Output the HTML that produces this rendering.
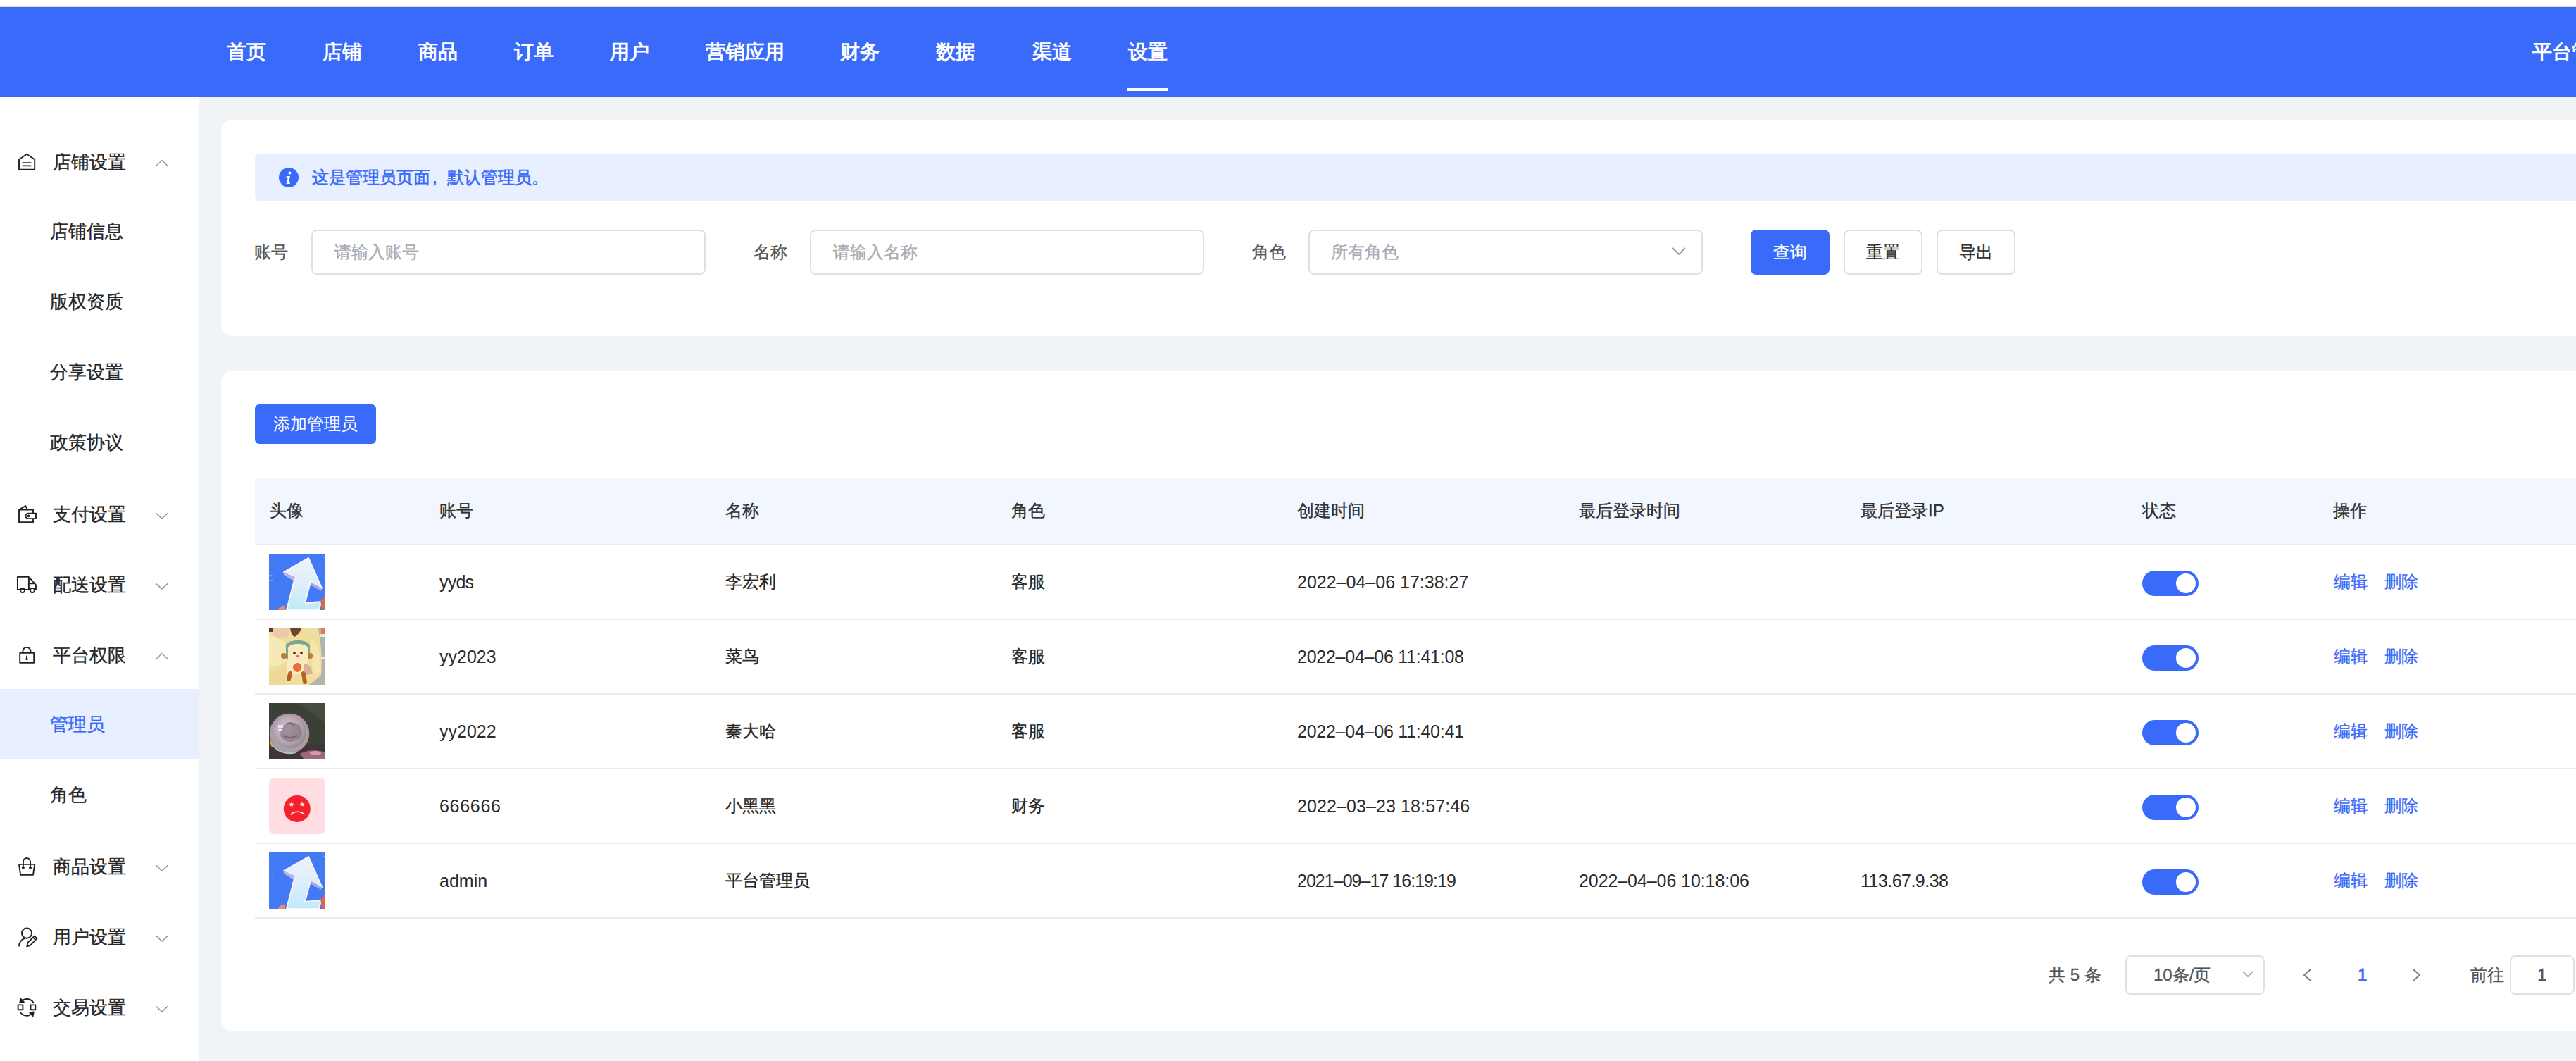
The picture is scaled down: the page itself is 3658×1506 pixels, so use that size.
<!DOCTYPE html>
<html><head><meta charset="utf-8">
<style>
*{margin:0;padding:0;box-sizing:border-box}
html,body{width:3658px;height:1506px;overflow:hidden;background:#f0f4f7;font-family:"Liberation Sans",sans-serif;color:#333}
.mh,.mi,.lbl,.th,.td,.lk,.ph,.btn{-webkit-text-stroke:0.35px currentColor}
.a{position:absolute;white-space:nowrap}
.nav{position:absolute;top:60px;font-size:28px;line-height:28px;color:#fff;font-weight:bold;white-space:nowrap}
.mh{position:absolute;left:75px;font-size:26px;line-height:26px;color:#262626;white-space:nowrap}
.mi{position:absolute;left:71px;font-size:26px;line-height:26px;color:#262626;white-space:nowrap}
.ic{position:absolute;left:24px;width:28px;height:28px}
.chev{position:absolute;left:219px;width:22px;height:14px}
.card{position:absolute;left:314px;width:3400px;background:#fff;border-radius:16px}
.lbl{position:absolute;font-size:24px;line-height:24px;color:#555;white-space:nowrap}
.inp{position:absolute;top:326px;height:64px;border:2px solid #e0e0e0;border-radius:8px;background:#fff}
.ph{position:absolute;font-size:24px;line-height:24px;color:#a8abb2;white-space:nowrap}
.btn{position:absolute;top:326px;width:112px;height:64px;border:2px solid #e0e0e0;border-radius:8px;background:#fff;font-size:24px;line-height:60px;text-align:center;color:#333;white-space:nowrap}
.th{position:absolute;font-size:24px;line-height:24px;color:#303030;white-space:nowrap}
.td{position:absolute;font-size:24px;line-height:24px;color:#262626;white-space:nowrap}

.av{position:absolute;left:382px;width:80px;height:80px;overflow:hidden}
.sw{position:absolute;left:3042px;width:80px;height:36px;border-radius:18px;background:#3a6afa}
.sw i{position:absolute;left:48px;top:4px;width:28px;height:28px;border-radius:50%;background:#fff}
.tl{position:absolute;font-size:25px;line-height:25px;color:#2b2b2b;white-space:nowrap}
.lk{position:absolute;font-size:24px;line-height:24px;color:#3a6afa;white-space:nowrap}
</style></head>
<body>
<div class="a" style="left:0px;top:0px;width:3658px;height:8px;background:#fff"></div>
<div class="a" style="left:0px;top:8px;width:3658px;height:2px;background:#dcdbd8"></div>
<div class="a" style="left:0px;top:10px;width:3658px;height:128px;background:#3a6afa"></div>
<div class="nav" style="left:322px">首页</div>
<div class="nav" style="left:458px">店铺</div>
<div class="nav" style="left:594px">商品</div>
<div class="nav" style="left:730px">订单</div>
<div class="nav" style="left:866px">用户</div>
<div class="nav" style="left:1002px">营销应用</div>
<div class="nav" style="left:1193px">财务</div>
<div class="nav" style="left:1329px">数据</div>
<div class="nav" style="left:1466px">渠道</div>
<div class="nav" style="left:1602px">设置</div>
<div class="a" style="left:1601px;top:125px;width:57px;height:4px;background:#fff"></div>
<div class="nav" style="left:3596px">平台管理员</div>
<div class="a" style="left:0px;top:138px;width:282px;height:1368px;background:#fff"></div>
<div class="mh" style="top:217px">店铺设置</div>
<div class="mi" style="top:315px">店铺信息</div>
<div class="mi" style="top:415px">版权资质</div>
<div class="mi" style="top:515px">分享设置</div>
<div class="mi" style="top:615px">政策协议</div>
<div class="mh" style="top:717px">支付设置</div>
<div class="mh" style="top:817px">配送设置</div>
<div class="mh" style="top:917px">平台权限</div>
<div class="a" style="left:0px;top:978px;width:282px;height:100px;background:#e8effe"></div>
<div class="mi" style="top:1015px;color:#3a6afa">管理员</div>
<div class="mi" style="top:1115px">角色</div>
<div class="mh" style="top:1217px">商品设置</div>
<div class="mh" style="top:1317px">用户设置</div>
<div class="mh" style="top:1417px">交易设置</div>
<svg class="a" style="left:0;top:0" width="282" height="1506" viewBox="0 0 282 1506"><g fill="none" stroke="#222" stroke-width="1.9" stroke-linejoin="round" stroke-linecap="round"><path d="M27 240.8V226.2L38 218.7l11.2 7.5v14.6zM32.2 231.1h11.5M32.2 235.4h11.5"/><path d="M27 723.6l9.2-5.6 2.8 5.6M27 723.6h20v5M47 736.1v5.2H27V723.6M51 728.6v7.5H40.2a3.75 3.75 0 0 1 0-7.5z"/><circle cx="40.6" cy="732.3" r="0.9" fill="#222"/><path d="M24.9 837V818.9h16V837zM40.9 822h2.8l7.3 8.4V837M40.9 828.3h7.6M35.1 837h7.7M28.9 837h-4"/><circle cx="32" cy="838" r="3.1"/><circle cx="45.9" cy="838" r="3.1"/><path d="M28.2 926.9h20v13.9h-20zM32.4 926.9v-2.5a5.55 5.55 0 0 1 11.1 0v2.5M38 931.4v3.6"/><circle cx="38" cy="935.4" r="0.8" fill="#222"/><path d="M27 1226.9h22.2l-2.2 14.9H29.1zM32.9 1231.4v-8.4a5.05 5.05 0 0 1 10.1 0v8.4"/><circle cx="32.9" cy="1231.6" r="1.1" fill="#222"/><circle cx="43" cy="1231.6" r="1.1" fill="#222"/><circle cx="38" cy="1324.6" r="7.1"/><path d="M35.5 1331.8A11.5 11.5 0 0 0 27 1342.6M38.3 1343.4l1-5.2 9.6-9.6 3.6 3.6-9.6 9.6zM46.9 1330.6l3.6 3.6"/><path d="M25.6 1426.4h6.8v6.9h-6.8zM43.5 1426.4h6.8v6.9h-6.8zM47.4 1423.2A10.5 10.5 0 0 0 30.2 1421.8M28.6 1436.4A10.5 10.5 0 0 0 45.8 1437.9"/><path d="M29.4 1417.6l-1.2 5.8 5.6-1.2z" fill="#222"/><path d="M46.6 1442.2l1.2-5.8-5.6 1.2z" fill="#222"/></g><path fill="none" stroke="#8a8a8a" stroke-width="1.3" d="M221.5 235.6l8.4-8l8.4 8 M221.5 728.3l8.4 7.7l8.4-7.7 M221.5 828.3l8.4 7.7l8.4-7.7 M221.5 935.6l8.4-8l8.4 8 M221.5 1228.3l8.4 7.7l8.4-7.7 M221.5 1328.3l8.4 7.7l8.4-7.7 M221.5 1428.3l8.4 7.7l8.4-7.7"/></svg>
<div class="card" style="top:170px;height:307px"></div>
<div class="card" style="top:526px;height:938px"></div>
<div class="a" style="left:362px;top:218px;width:3400px;height:68px;background:#e8effe;border-radius:8px"></div>
<svg class="a" style="left:396px;top:238px" width="28" height="28" viewBox="0 0 28 28"><circle cx="14" cy="14" r="14" fill="#3a6afa"/><circle cx="15.5" cy="7.5" r="2" fill="#fff"/><path d="M11 12h5l-2.5 9h2.5l-.5 2h-5l2.5-9h-2.5z" fill="#fff"/></svg>
<div class="a" style="left:443px;top:240px;font-size:24px;line-height:24px;color:#3a6afa;-webkit-text-stroke:0.6px #3a6afa">这是管理员页面<span style="display:inline-block;width:24px;padding-left:3px">,</span>默认管理员。</div>
<div class="lbl" style="left:361px;top:346px">账号</div>
<div class="inp" style="left:442px;width:560px"></div>
<div class="ph" style="left:475px;top:346px">请输入账号</div>
<div class="lbl" style="left:1070px;top:346px">名称</div>
<div class="inp" style="left:1150px;width:560px"></div>
<div class="ph" style="left:1183px;top:346px">请输入名称</div>
<div class="lbl" style="left:1778px;top:346px">角色</div>
<div class="inp" style="left:1858px;width:560px"></div>
<div class="ph" style="left:1890px;top:346px">所有角色</div>
<svg class="a" style="left:2373px;top:350px" width="22" height="14" viewBox="0 0 22 14"><path fill="none" stroke="#999" stroke-width="1.8" d="M2 2l9 9 9-9"/></svg>
<div class="btn" style="left:2486px;background:#3a6afa;border-color:#3a6afa;color:#fff">查询</div>
<div class="btn" style="left:2618px">重置</div>
<div class="btn" style="left:2750px">导出</div>
<div class="a" style="left:362px;top:574px;width:172px;height:56px;background:#3a6afa;border-radius:6px;color:#fff;font-size:24px;line-height:56px;text-align:center">添加管理员</div>
<div class="a" style="left:362px;top:678px;width:3300px;height:94px;background:#f2f6fe"></div>
<div class="a" style="left:362px;top:772px;width:3300px;height:2px;background:#ebebeb"></div>
<div class="th" style="left:383px;top:713px">头像</div>
<div class="th" style="left:624px;top:713px">账号</div>
<div class="th" style="left:1030px;top:713px">名称</div>
<div class="th" style="left:1436px;top:713px">角色</div>
<div class="th" style="left:1842px;top:713px">创建时间</div>
<div class="th" style="left:2242px;top:713px">最后登录时间</div>
<div class="th" style="left:2642px;top:713px">最后登录IP</div>
<div class="th" style="left:3042px;top:713px">状态</div>
<div class="th" style="left:3313px;top:713px">操作</div>
<svg class="av" style="top:786px" viewBox="0 0 80 80"><defs><linearGradient id="ag786" x1="0" y1="0" x2="0" y2="1"><stop offset="0" stop-color="#eef2fc"/><stop offset="0.5" stop-color="#dfeefa"/><stop offset="1" stop-color="#bfeaf8"/></linearGradient></defs><rect width="80" height="80" fill="#4279f5"/><circle cx="2" cy="34" r="4" fill="none" stroke="#7aa0f8" stroke-width="1"/><circle cx="80" cy="2" r="4" fill="none" stroke="#7aa0f8" stroke-width="1"/><path d="M56 6L75 49L59 40L51 70L74 68L71 80H25L37 33L21 26Z" fill="url(#ag786)" stroke="#f6f4ff" stroke-width="2" stroke-linejoin="round"/><path d="M21 26L37 33L35.5 39L21 30Z" fill="#b7b4e8"/><path d="M59 40L75 49L74 53L60 45Z" fill="#a9a8e6"/><path d="M13 80c1-5 6-7 10-6l-1 6z" fill="#f08a66"/><path d="M73 66c3-3 5-5 7-6v20h-5z" fill="#d06a56"/></svg>
<div class="tl" style="left:624px;top:814px;letter-spacing:-0.8px">yyds</div>
<div class="td" style="left:1030px;top:814px">李宏利</div>
<div class="td" style="left:1436px;top:814px">客服</div>
<div class="tl" style="left:1842px;top:814px;letter-spacing:0px">2022–04–06 17:38:27</div>
<div class="sw" style="top:810px"><i></i></div>
<div class="lk" style="left:3314px;top:814px">编辑</div>
<div class="lk" style="left:3386px;top:814px">删除</div>
<div class="a" style="left:362px;top:878px;width:3300px;height:2px;background:#ebebeb"></div>
<svg class="av" style="top:892px" viewBox="0 0 80 80"><rect width="80" height="80" fill="#f0df9c"/><path d="M70 0h10v80H56c8-4 14-10 18-14c2-20 0-44-4-66z" fill="#b4b2ac"/><path d="M72 8h8v4h-8zM74 40h6v3h-6z" fill="#e6e8ea"/><path d="M74 0h6v8h-6z" fill="#e07a48"/><path d="M0 0h8v5H0z" fill="#5b3b2a"/><path d="M30 0h16c-2 6-6 10-10 12c-3-2-5-6-6-12z" fill="#6e4630"/><path d="M6 0h24l-3 11c-6 4-14 4-21-2z" fill="#eacaa8"/><path d="M0 10c6 2 14 4 22 10l4 24c-8 8-16 10-26 10z" fill="#f6e9b8"/><path d="M60 14c10 6 14 22 12 48l-10 4z" fill="#f5e6ae"/><path d="M0 60c6 0 14-2 24-8v28H0z" fill="#eed996"/><path d="M24 24c2-5 8-7 17-7s15 2 17 7v20H24z" fill="#7ea493"/><path d="M27 27c2-3 7-5 14-5s12 2 14 5c1 2-1 3 0 5v14H27V32c1-2-1-3 0-5z" fill="#f8ecbc"/><path d="M25 44h29l1 20H26z" fill="#f7ebc6"/><circle cx="36" cy="35" r="1.9" fill="#4a2626"/><circle cx="46" cy="35" r="1.9" fill="#4a2626"/><ellipse cx="41" cy="39.5" rx="2.3" ry="1.7" fill="#ea5f8c"/><path d="M34 55c0-4 4-6 7-6s6 3 5 7c-1 4-4 6-6 6s-6-3-6-7z" fill="#f06a36"/><rect x="17" y="35" width="8" height="8" rx="4" fill="#c47838"/><rect x="55" y="35" width="7" height="8" rx="3.5" fill="#c47838"/><path d="M30 64l-2 8M49 64l2 12" stroke="#b5612a" stroke-width="6" stroke-linecap="round"/><path d="M50 50c6 0 11 6 12 14l-8 2-4-6z" fill="#d9b09a"/></svg>
<div class="tl" style="left:624px;top:920px;letter-spacing:0px">yy2023</div>
<div class="td" style="left:1030px;top:920px">菜鸟</div>
<div class="td" style="left:1436px;top:920px">客服</div>
<div class="tl" style="left:1842px;top:920px;letter-spacing:-0.25px">2022–04–06 11:41:08</div>
<div class="sw" style="top:916px"><i></i></div>
<div class="lk" style="left:3314px;top:920px">编辑</div>
<div class="lk" style="left:3386px;top:920px">删除</div>
<div class="a" style="left:362px;top:984px;width:3300px;height:2px;background:#ebebeb"></div>
<svg class="av" style="top:998px" viewBox="0 0 80 80"><defs><radialGradient id="bg998" cx="0.42" cy="0.42" r="0.62"><stop offset="0" stop-color="#d6c8d2"/><stop offset="0.65" stop-color="#b8a6b6"/><stop offset="1" stop-color="#8d8a8c"/></radialGradient></defs><rect width="80" height="80" fill="#3b4037"/><path d="M40 0h40v30c-10-8-24-20-40-30z" fill="#464a40"/><path d="M0 62L80 58V80H0z" fill="#3f3438"/><path d="M44 72c10-6 24-6 36-2v10H50z" fill="#9a6a7c"/><ellipse cx="66" cy="71" rx="8" ry="3" fill="#d49aaa"/><circle cx="29" cy="43" r="27.5" fill="#a8a0a6" stroke="#b88a94" stroke-width="1.6"/><circle cx="30" cy="41" r="23" fill="url(#bg998)"/><path d="M17 38c3-10 16-14 24-8s8 18 0 22-14 4-20 0-5-8-4-14z" fill="#76666f" opacity="0.55"/><path d="M24 30c4-3 10-2 12 2M20 46c6 4 14 4 20 0" stroke="#5e5058" stroke-width="2" fill="none" opacity="0.6"/><path d="M13 31h7v4h-7zM13 37h6v3h-6z" fill="#dde6f4"/><path d="M4 58c6 10 20 16 34 12" stroke="#a8c4c4" stroke-width="2" fill="none"/><path d="M2 54l3 8" stroke="#e0a060" stroke-width="2.5"/></svg>
<div class="tl" style="left:624px;top:1026px;letter-spacing:0px">yy2022</div>
<div class="td" style="left:1030px;top:1026px">秦大哈</div>
<div class="td" style="left:1436px;top:1026px">客服</div>
<div class="tl" style="left:1842px;top:1026px;letter-spacing:-0.25px">2022–04–06 11:40:41</div>
<div class="sw" style="top:1022px"><i></i></div>
<div class="lk" style="left:3314px;top:1026px">编辑</div>
<div class="lk" style="left:3386px;top:1026px">删除</div>
<div class="a" style="left:362px;top:1090px;width:3300px;height:2px;background:#ebebeb"></div>
<svg class="av" style="top:1104px" viewBox="0 0 80 80"><rect width="80" height="80" rx="8" fill="#ffdde2"/><circle cx="39.8" cy="43.9" r="19" fill="#f5222d"/><path d="M31.9 34.3l1.1 2.2 2.4.3-1.8 1.6.5 2.4-2.2-1.2-2.2 1.2.5-2.4-1.8-1.6 2.4-.3zM47.2 34.3l1.1 2.2 2.4.3-1.8 1.6.5 2.4-2.2-1.2-2.2 1.2.5-2.4-1.8-1.6 2.4-.3z" fill="#ffe0e0"/><path d="M30.8 52.5a11.5 9 0 0 1 19.4 0" fill="none" stroke="#fff" stroke-width="1.5"/></svg>
<div class="tl" style="left:624px;top:1132px;letter-spacing:0.7px">666666</div>
<div class="td" style="left:1030px;top:1132px">小黑黑</div>
<div class="td" style="left:1436px;top:1132px">财务</div>
<div class="tl" style="left:1842px;top:1132px;letter-spacing:0.1px">2022–03–23 18:57:46</div>
<div class="sw" style="top:1128px"><i></i></div>
<div class="lk" style="left:3314px;top:1132px">编辑</div>
<div class="lk" style="left:3386px;top:1132px">删除</div>
<div class="a" style="left:362px;top:1196px;width:3300px;height:2px;background:#ebebeb"></div>
<svg class="av" style="top:1210px" viewBox="0 0 80 80"><defs><linearGradient id="ag1210" x1="0" y1="0" x2="0" y2="1"><stop offset="0" stop-color="#eef2fc"/><stop offset="0.5" stop-color="#dfeefa"/><stop offset="1" stop-color="#bfeaf8"/></linearGradient></defs><rect width="80" height="80" fill="#4279f5"/><circle cx="2" cy="34" r="4" fill="none" stroke="#7aa0f8" stroke-width="1"/><circle cx="80" cy="2" r="4" fill="none" stroke="#7aa0f8" stroke-width="1"/><path d="M56 6L75 49L59 40L51 70L74 68L71 80H25L37 33L21 26Z" fill="url(#ag1210)" stroke="#f6f4ff" stroke-width="2" stroke-linejoin="round"/><path d="M21 26L37 33L35.5 39L21 30Z" fill="#b7b4e8"/><path d="M59 40L75 49L74 53L60 45Z" fill="#a9a8e6"/><path d="M13 80c1-5 6-7 10-6l-1 6z" fill="#f08a66"/><path d="M73 66c3-3 5-5 7-6v20h-5z" fill="#d06a56"/></svg>
<div class="tl" style="left:624px;top:1238px;letter-spacing:0px">admin</div>
<div class="td" style="left:1030px;top:1238px">平台管理员</div>
<div class="tl" style="left:1842px;top:1238px;letter-spacing:-0.97px">2021–09–17 16:19:19</div>
<div class="tl" style="left:2242px;top:1238px;letter-spacing:-0.08px">2022–04–06 10:18:06</div>
<div class="tl" style="left:2642px;top:1238px;letter-spacing:-0.53px">113.67.9.38</div>
<div class="sw" style="top:1234px"><i></i></div>
<div class="lk" style="left:3314px;top:1238px">编辑</div>
<div class="lk" style="left:3386px;top:1238px">删除</div>
<div class="a" style="left:362px;top:1302px;width:3300px;height:2px;background:#ebebeb"></div>
<div class="td" style="left:2909px;top:1372px;color:#555">共 5 条</div>
<div class="a" style="left:3018px;top:1356px;width:198px;height:56px;border:2px solid #e0e0e0;border-radius:8px;background:#fff"></div>
<div class="td" style="left:3058px;top:1372px;color:#555">10条/页</div>
<svg class="a" style="left:3184px;top:1377px" width="16" height="12" viewBox="0 0 16 12"><path fill="none" stroke="#999" stroke-width="1.6" d="M1 2l7 7 7-7"/></svg>
<svg class="a" style="left:3268px;top:1374px" width="16" height="20" viewBox="0 0 16 20"><path fill="none" stroke="#7a7a7a" stroke-width="1.8" d="M13 2L4 10l9 8"/></svg>
<div class="td" style="left:3348px;top:1372px;color:#3a6afa;-webkit-text-stroke:0.8px #3a6afa">1</div>
<svg class="a" style="left:3424px;top:1374px" width="16" height="20" viewBox="0 0 16 20"><path fill="none" stroke="#7a7a7a" stroke-width="1.8" d="M3 2l9 8-9 8"/></svg>
<div class="td" style="left:3508px;top:1372px;color:#555">前往</div>
<div class="a" style="left:3564px;top:1356px;width:92px;height:56px;border:2px solid #e0e0e0;border-radius:8px;background:#fff"></div>
<div class="td" style="left:3603px;top:1372px;color:#555">1</div>
</body></html>
